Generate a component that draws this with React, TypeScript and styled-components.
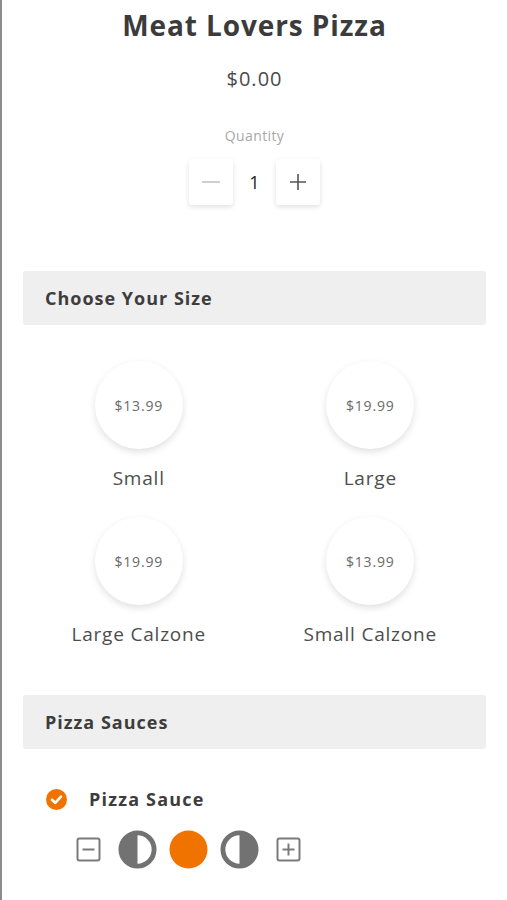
import React from "react";
import styled, { createGlobalStyle } from "styled-components";

const Global = createGlobalStyle`
  html, body { margin: 0; padding: 0; background: #fff; }
  body { font-family: "Open Sans", Lato, "Liberation Sans", sans-serif; color: #444; }
`;

const Page = styled.div`
  min-height: 900px;
  border-left: 2px solid #8c8c8c;
  box-sizing: border-box;
  padding: 0 21px 0 21px;
  display: flex;
  flex-direction: column;
`;

const Title = styled.h1`
  margin: 8px 0 0;
  text-align: center;
  font-size: 28px;
  line-height: 34px;
  font-weight: 700;
  letter-spacing: 0.9px;
  color: #3b3b3b;
`;

const Price = styled.div`
  margin-top: 25px;
  text-align: center;
  font-size: 20px;
  line-height: 24px;
  letter-spacing: 1px;
  color: #4a4a4a;
`;

const QtyLabel = styled.div`
  margin-top: 36px;
  text-align: center;
  font-size: 14px;
  line-height: 18px;
  letter-spacing: 0.4px;
  color: #a8a8a8;
`;

const QtyRow = styled.div`
  margin-top: 14px;
  display: flex;
  justify-content: center;
  align-items: center;
`;

const QtyButton = styled.button<{ $muted?: boolean }>`
  width: 44px;
  height: 46px;
  border: none;
  background: #fff;
  border-radius: 3px;
  box-shadow: 0 2px 5px rgba(0, 0, 0, 0.12);
  display: flex;
  align-items: center;
  justify-content: center;
  padding: 0;
  color: ${(p) => (p.$muted ? "#c4c4c4" : "#555")};
`;

const QtyValue = styled.div`
  width: 43px;
  text-align: center;
  font-size: 18px;
  color: #222;
`;

const SectionHeader = styled.div<{ $top: number }>`
  margin-top: ${(p) => p.$top}px;
  height: 54px;
  background: #efefef;
  border-radius: 3px;
  display: flex;
  align-items: center;
  padding-left: 22px;
  font-size: 18px;
  font-weight: 700;
  letter-spacing: 1px;
  color: #3d3d3d;
`;

const SizeGrid = styled.div`
  margin-top: 36px;
  display: grid;
  grid-template-columns: 1fr 1fr;
  row-gap: 26px;
`;

const SizeOption = styled.div`
  display: flex;
  flex-direction: column;
  align-items: center;
`;

const SizeCircle = styled.div`
  width: 88px;
  height: 88px;
  border-radius: 50%;
  background: #fff;
  box-shadow: 0 3px 7px rgba(0, 0, 0, 0.12);
  display: flex;
  align-items: center;
  justify-content: center;
  font-size: 14px;
  letter-spacing: 0.8px;
  color: #6a6a6a;
`;

const SizeLabel = styled.div`
  margin-top: 16px;
  font-size: 19px;
  line-height: 26px;
  letter-spacing: 0.8px;
  color: #4d4d4d;
`;

const ToppingRow = styled.div`
  margin-top: 38px;
  display: flex;
  align-items: center;
  padding-left: 23px;
`;

const ToppingName = styled.div`
  margin-left: 22px;
  font-size: 18px;
  font-weight: 700;
  letter-spacing: 1.2px;
  color: #3d3d3d;
`;

const PortionRow = styled.div`
  margin-top: 19px;
  padding-left: 53px;
  display: flex;
  align-items: center;
  gap: 12px;
`;

const SquareSlot = styled.div<{ $side: "left" | "right" }>`
  display: flex;
  ${(p) => (p.$side === "left" ? "margin-right: 5px;" : "margin-left: 5px;")}
`;

const Check = () => (
  <svg width="21" height="21" viewBox="0 0 21 21">
    <circle cx="10.5" cy="10.5" r="10.5" fill="#f07300" />
    <path d="M6 10.8 L9.2 13.8 L15 7.6" fill="none" stroke="#fff" strokeWidth="2.6" strokeLinecap="round" strokeLinejoin="round" />
  </svg>
);

const SquareIcon = ({ plus }: { plus?: boolean }) => (
  <svg width="25" height="25" viewBox="0 0 25 25">
    <rect x="1.5" y="1.5" width="22" height="22" rx="2" fill="none" stroke="#7a7a7a" strokeWidth="2" />
    <path d="M6.5 12.5 H18.5" stroke="#7a7a7a" strokeWidth="2" />
    {plus && <path d="M12.5 6.5 V18.5" stroke="#7a7a7a" strokeWidth="2" />}
  </svg>
);

const HalfIcon = ({ side }: { side: "left" | "right" }) => (
  <svg width="39" height="39" viewBox="0 0 40 40">
    <circle cx="20" cy="20" r="17" fill="#fff" stroke="#727272" strokeWidth="5" />
    {side === "left" ? (
      <path d="M20 2.5 A17.5 17.5 0 0 0 20 37.5 Z" fill="#727272" />
    ) : (
      <path d="M20 2.5 A17.5 17.5 0 0 1 20 37.5 Z" fill="#727272" />
    )}
  </svg>
);

const WholeIcon = () => (
  <svg width="39" height="39" viewBox="0 0 40 40">
    <circle cx="20" cy="20" r="19.5" fill="#f07300" />
  </svg>
);

const sizes = [
  { price: "$13.99", name: "Small" },
  { price: "$19.99", name: "Large" },
  { price: "$19.99", name: "Large Calzone" },
  { price: "$13.99", name: "Small Calzone" },
];

export default function App() {
  return (
    <>
      <Global />
      <Page>
        <Title>Meat Lovers Pizza</Title>
        <Price>$0.00</Price>
        <QtyLabel>Quantity</QtyLabel>
        <QtyRow>
          <QtyButton $muted aria-label="decrease">
            <svg width="20" height="20" viewBox="0 0 20 20">
              <path d="M1 10 H19" stroke="currentColor" strokeWidth="1.6" />
            </svg>
          </QtyButton>
          <QtyValue>1</QtyValue>
          <QtyButton aria-label="increase">
            <svg width="20" height="20" viewBox="0 0 20 20">
              <path d="M2 10 H18 M10 2 V18" stroke="currentColor" strokeWidth="1.6" />
            </svg>
          </QtyButton>
        </QtyRow>
        <SectionHeader $top={66}>Choose Your Size</SectionHeader>
        <SizeGrid>
          {sizes.map((s) => (
            <SizeOption key={s.name}>
              <SizeCircle>{s.price}</SizeCircle>
              <SizeLabel>{s.name}</SizeLabel>
            </SizeOption>
          ))}
        </SizeGrid>
        <SectionHeader $top={48}>Pizza Sauces</SectionHeader>
        <ToppingRow>
          <Check />
          <ToppingName>Pizza Sauce</ToppingName>
        </ToppingRow>
        <PortionRow>
          <SquareSlot $side="left">
            <SquareIcon />
          </SquareSlot>
          <HalfIcon side="left" />
          <WholeIcon />
          <HalfIcon side="right" />
          <SquareSlot $side="right">
            <SquareIcon plus />
          </SquareSlot>
        </PortionRow>
      </Page>
    </>
  );
}
